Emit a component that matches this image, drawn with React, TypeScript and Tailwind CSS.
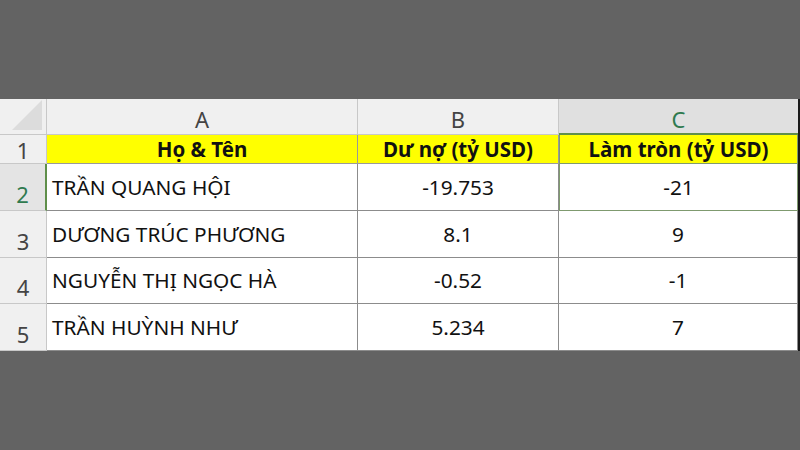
import React from 'react';

const ROWS = [
  { n: '2', name: 'TRẦN QUANG HỘI', debt: '-19.753', round: '-21' },
  { n: '3', name: 'DƯƠNG TRÚC PHƯƠNG', debt: '8.1', round: '9' },
  { n: '4', name: 'NGUYỄN THỊ NGỌC HÀ', debt: '-0.52', round: '-1' },
  { n: '5', name: 'TRẦN HUỲNH NHƯ', debt: '5.234', round: '7' },
];

const font = { fontFamily: '"Noto Sans", "Open Sans", sans-serif' };

const App = () => {
  return (
    <div className="w-[800px] h-[450px] bg-[#636363] flex items-center" style={font}>
      <div className="w-[800px] h-[252px] bg-white flex">
        <div className="grid grid-cols-[47px_311px_201px_239px] grid-rows-[36px_29px_47px_47px_46px_47px] w-[798px] text-[#111]">
          {/* column headers */}
          <div className="relative bg-[#f0f0f0] border-r border-b border-[#c8c8c8]">
            <svg className="absolute right-[4px] bottom-[4px]" width="30" height="30" viewBox="0 0 30 30">
              <polygon points="30,0 30,30 0,30" fill="#dcdcdc" />
            </svg>
          </div>
          <div className="bg-[#f0f0f0] border-r border-b border-[#c8c8c8] flex items-end justify-center pb-[4px] text-[22px] leading-none text-[#444]">A</div>
          <div className="bg-[#f0f0f0] border-r border-b border-[#c8c8c8] flex items-end justify-center pb-[4px] text-[22px] leading-none text-[#444]">B</div>
          <div className="bg-[#e0e0e0] border-b-2 border-[#5f8f4a] flex items-end justify-center pb-[3px] text-[22px] leading-none text-[#2f7a4f]">C</div>

          {/* row 1 */}
          <div className="bg-[#f0f0f0] border-r border-b border-[#c8c8c8] flex items-end justify-center pb-[2px] text-[22px] leading-none text-[#444]">1</div>
          <div className="bg-[#ffff00] border-r border-b border-[#9a9a9a] flex items-center justify-center text-[20.5px] font-bold leading-none">Họ &amp; Tên</div>
          <div className="bg-[#ffff00] border-r border-b border-[#9a9a9a] flex items-center justify-center text-[20.5px] font-bold leading-none">Dư nợ (tỷ USD)</div>
          <div className="bg-[#ffff00] border-l border-r border-b border-[#7f9a6f] flex items-center justify-center text-[20.5px] font-bold leading-none">Làm tròn (tỷ USD)</div>

          {ROWS.map((r, i) => {
            const active = i === 0;
            return (
              <React.Fragment key={r.n}>
                <div
                  className={`border-b border-[#c8c8c8] flex items-end justify-center pb-[5px] text-[22px] leading-none ${
                    active ? 'bg-[#e4e4e4] text-[#2f7a4f] border-r-2 border-r-[#5f8f4a]' : 'bg-[#f0f0f0] text-[#444] border-r'
                  }`}
                >
                  {r.n}
                </div>
                <div className="border-r border-b border-[#8c8c8c] flex items-center pl-[5px] text-[20.8px] leading-none">{r.name}</div>
                <div className="border-r border-b border-[#8c8c8c] flex items-center justify-center text-[20.8px] leading-none">{r.debt}</div>
                <div
                  className={`flex items-center justify-center text-[20.8px] leading-none border-b ${
                    active ? 'border-l border-r border-[#7f9a6f]' : 'border-r border-[#8c8c8c]'
                  }`}
                >
                  {r.round}
                </div>
              </React.Fragment>
            );
          })}
        </div>
        <div className="w-[2px] bg-[#1a1a1a]" />
      </div>
    </div>
  );
};

export default App;
